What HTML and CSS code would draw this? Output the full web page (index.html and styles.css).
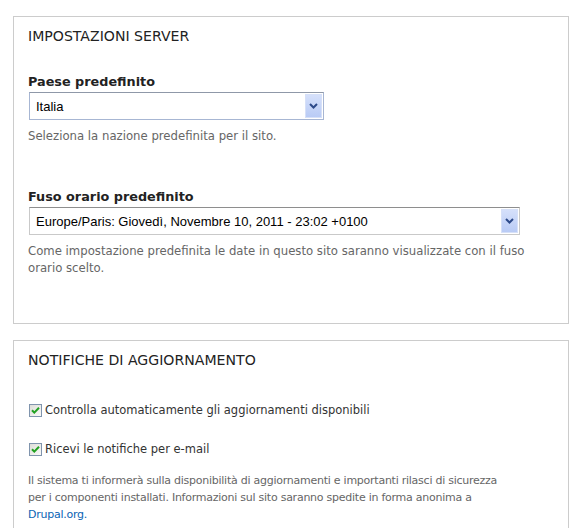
FILE: index.html
```html
<!DOCTYPE html>
<html lang="it">
<head>
<meta charset="utf-8" />
<title>Impostazioni regionali</title>
<link rel="stylesheet" href="styles.css">
</head>

<body>
<div class="page">
	<div class="fieldset fieldset-server">
		<h2 class="legend">Impostazioni server</h2>

		<div class="form-item item-country">
			<label class="label">Paese predefinito</label>
			<div class="select select-country">
				<span class="select-value">Italia</span>
				<span class="select-arrow"><svg width="9" height="6" viewBox="0 0 9 6"><path d="M1 1 L4.5 4.5 L8 1" fill="none" stroke="#2d4a8a" stroke-width="2"/></svg></span>
			</div>
			<div class="description">Seleziona la nazione predefinita per il sito.</div>
		</div>

		<div class="form-item item-timezone">
			<label class="label">Fuso orario predefinito</label>
			<div class="select select-timezone">
				<span class="select-value">Europe/Paris: Giovedì, Novembre 10, 2011 - 23:02 +0100</span>
				<span class="select-arrow"><svg width="9" height="6" viewBox="0 0 9 6"><path d="M1 1 L4.5 4.5 L8 1" fill="none" stroke="#2d4a8a" stroke-width="2"/></svg></span>
			</div>
			<div class="description">Come impostazione predefinita le date in questo sito saranno visualizzate con il fuso orario scelto.</div>
		</div>
	</div>

	<div class="fieldset fieldset-update">
		<h2 class="legend">Notifiche di aggiornamento</h2>

		<div class="checkbox check-first">
			<svg class="check-box" width="13" height="13" viewBox="0 0 13 13">
				<defs>
					<linearGradient id="cbg" x1="0" y1="0" x2="1" y2="1">
						<stop offset="0" stop-color="#dcdcd6"/>
						<stop offset="1" stop-color="#fbfbfa"/>
					</linearGradient>
				</defs>
				<rect x="0.5" y="0.5" width="12" height="12" fill="url(#cbg)" stroke="#7f94ad"/>
				<path d="M3 6.2 L5.3 8.6 L10 3.8" fill="none" stroke="#21a121" stroke-width="2"/>
			</svg>
			<span class="check-label">Controlla automaticamente gli aggiornamenti disponibili</span>
		</div>

		<div class="checkbox check-second">
			<svg class="check-box" width="13" height="13" viewBox="0 0 13 13">
				<rect x="0.5" y="0.5" width="12" height="12" fill="url(#cbg)" stroke="#7f94ad"/>
				<path d="M3 6.2 L5.3 8.6 L10 3.8" fill="none" stroke="#21a121" stroke-width="2"/>
			</svg>
			<span class="check-label">Ricevi le notifiche per e-mail</span>
		</div>

		<div class="description update-desc">Il sistema ti informerà sulla disponibilità di aggiornamenti e importanti rilasci di sicurezza per i componenti installati. Informazioni sul sito saranno spedite in forma anonima a <a href="#">Drupal.org.</a></div>
	</div>
</div>
</body>
</html>
```

FILE: styles.css
```css
*{ padding:0; margin:0;}

body{ background:#fff; color:#333; font-family:"DejaVu Sans", Verdana, sans-serif;}

.page{ padding:16px 2px 0 13px;}

/* riquadri */
.fieldset{ border:1px solid #ccc; padding:11px 14px 0;}
.fieldset-server{ padding-bottom:46px;}
.fieldset-update{ margin-top:16px; padding-bottom:40px;}
.legend{ color:#222; font-size:14.1px; font-weight:normal; line-height:17px; text-transform:uppercase;}

/* campi */
.item-country{ margin-top:28px;}
.item-timezone{ margin-top:43px;}
.label{ display:block; color:#222; font-size:12.8px; font-weight:bold; line-height:17px; margin-bottom:2px;}

.select{ display:flex; align-items:stretch; height:28px; box-sizing:border-box; margin-left:1px; padding:1px; border:1px solid #a7b6d3; border-top-color:#8f98a8; background:#fff;}
.select-country{ width:295px;}
.select-timezone{ width:491px; border-color:#c9c9c9; border-top-color:#8e8e8e;}
.select-value{ flex:1; display:flex; align-items:center; padding-left:5px; color:#000; font-family:"Liberation Sans", Arial, sans-serif; font-size:13px; white-space:nowrap; overflow:hidden;}
.select-arrow{ display:flex; align-items:center; justify-content:center; width:17px; box-sizing:border-box; border:1px solid #d6e0f8; background:linear-gradient(#d5e0fb, #b9cbf5);}

.description{ margin-top:8px; color:#666; font-size:11.7px; line-height:17px;}
.description a{ color:#0a64b4; text-decoration:none;}

/* caselle */
.checkbox{ display:flex; align-items:center; height:17px; margin-left:1px;}
.check-first{ margin-top:33px;}
.check-second{ margin-top:22px;}
.check-box{ flex:none; margin-right:3px;}
.check-label{ color:#333; font-size:11.5px; line-height:17px; white-space:nowrap;}

.update-desc{ margin-top:14px; max-width:478px; font-size:11px; letter-spacing:-0.25px;}
```
